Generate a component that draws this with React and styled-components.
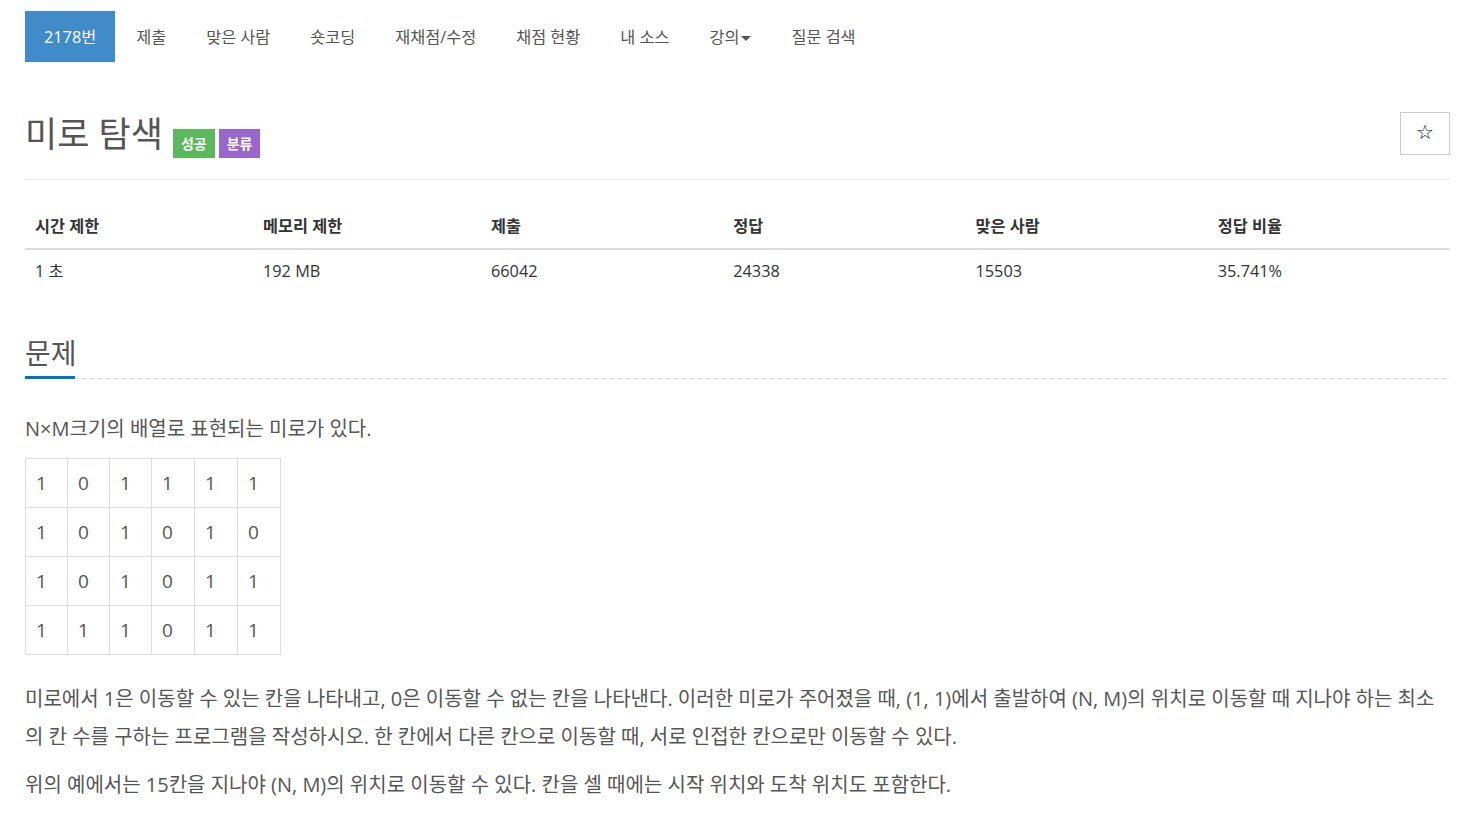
import React from "react";
import styled, { createGlobalStyle } from "styled-components";

const Global = createGlobalStyle`
  html, body { margin: 0; padding: 0; background: #fff; }
  body {
    font-family: "Open Sans", "Noto Sans CJK KR", sans-serif;
    color: #555;
    font-size: 14px;
  }
  * { box-sizing: border-box; }
`;

const Page = styled.div`
  width: 1425px;
  margin-left: 25px;
  padding-top: 11px;
`;

const Nav = styled.ul`
  display: flex;
  list-style: none;
  margin: 0;
  padding: 0;
  gap: 2px;
`;

const NavItem = styled.li`
  padding: 16px 19px 14px;
  height: 51px;
  font-size: 16.3px;
  line-height: 21px;
  color: ${(p) => (p.$active ? "#fff" : "#555")};
  background: ${(p) => (p.$active ? "#428bca" : "transparent")};
  display: flex;
  align-items: center;
  white-space: nowrap;
`;

const Caret = styled.span`
  display: inline-block;
  width: 0;
  height: 0;
  margin-left: 2px;
  border-top: 5px solid #555;
  border-left: 5px solid transparent;
  border-right: 5px solid transparent;
  margin-top: 2px;
`;

const Header = styled.div`
  display: flex;
  align-items: flex-start;
  justify-content: space-between;
  margin-top: 39px;
  padding-bottom: 20px;
  border-bottom: 1px solid #eee;
`;

const TitleRow = styled.div`
  display: flex;
  align-items: flex-end;
  margin-top: 8px;
`;

const Title = styled.h1`
  margin: 0;
  font-size: 35px;
  font-weight: 400;
  line-height: 50px;
  color: #555;
  margin-right: 10px;
`;

const Label = styled.span`
  display: inline-block;
  background: ${(p) => p.$bg};
  color: #fff;
  font-size: 14px;
  font-weight: 700;
  height: 29px;
  line-height: 29px;
  padding: 0 8px;
  margin-right: 4px;
  margin-bottom: 1px;
`;

const StarButton = styled.button`
  width: 50px;
  height: 43px;
  margin-top: 11px;
  border: 1px solid #ccc;
  background: #fff;
  font-size: 20px;
  line-height: 1;
  color: #111;
  display: flex;
  align-items: center;
  justify-content: center;
  padding: 0 0 4px;
  font-family: "DejaVu Sans", sans-serif;
`;

const InfoTable = styled.table`
  width: 100%;
  border-collapse: collapse;
  margin-top: 20px;
  table-layout: fixed;
`;

const Th = styled.th`
  text-align: left;
  font-weight: 700;
  font-size: 16.3px;
  color: #333;
  padding: 13px 10px 11px;
  border-bottom: 2px solid #ddd;
  width: ${(p) => p.$w};
`;

const Td = styled.td`
  font-size: 16.3px;
  color: #333;
  padding: 10px 10px;
  line-height: 22px;
`;

const SectionHead = styled.div`
  margin-top: 41px;
  border-bottom: 1px dotted #ddd;
  display: flex;
`;

const SectionTitle = styled.h2`
  margin: 0;
  font-size: 28px;
  font-weight: 400;
  line-height: 40px;
  color: #555;
  padding-bottom: 3px;
  border-bottom: 3px solid #0076c0;
  margin-bottom: -1px;
  width: 50px;
  white-space: nowrap;
`;

const Description = styled.div`
  margin-top: 31px;
  font-size: 20px;
  line-height: 38px;
  color: #555;
`;

const Para = styled.p`
  margin: 0 0 10px;
`;

const Grid = styled.table`
  border-collapse: collapse;
  margin: 5px 0 25px;
`;

const Cell = styled.td`
  border: 1px solid #ddd;
  padding: 8px 10px;
  height: 49px;
  font-size: 19px;
  line-height: 30px;
  color: #555;
  width: ${(p) => p.$w}px;
`;

const maze = [
  [1, 0, 1, 1, 1, 1],
  [1, 0, 1, 0, 1, 0],
  [1, 0, 1, 0, 1, 1],
  [1, 1, 1, 0, 1, 1],
];
const colW = [42, 42, 42, 43, 43, 43];

const navItems = ["제출", "맞은 사람", "숏코딩", "재채점/수정", "채점 현황", "내 소스"];

export default function App() {
  return (
    <>
      <Global />
      <Page>
        <Nav>
          <NavItem $active>2178번</NavItem>
          {navItems.map((t) => (
            <NavItem key={t}>{t}</NavItem>
          ))}
          <NavItem>
            강의<Caret />
          </NavItem>
          <NavItem>질문 검색</NavItem>
        </Nav>

        <Header>
          <TitleRow>
            <Title>미로 탐색</Title>
            <Label $bg="#5cb85c">성공</Label>
            <Label $bg="#9966cc">분류</Label>
          </TitleRow>
          <StarButton>☆</StarButton>
        </Header>

        <InfoTable>
          <thead>
            <tr>
              <Th $w="16%">시간 제한</Th>
              <Th $w="16%">메모리 제한</Th>
              <Th $w="17%">제출</Th>
              <Th $w="17%">정답</Th>
              <Th $w="17%">맞은 사람</Th>
              <Th $w="17%">정답 비율</Th>
            </tr>
          </thead>
          <tbody>
            <tr>
              <Td>1 초</Td>
              <Td>192 MB</Td>
              <Td>66042</Td>
              <Td>24338</Td>
              <Td>15503</Td>
              <Td>35.741%</Td>
            </tr>
          </tbody>
        </InfoTable>

        <SectionHead>
          <SectionTitle>문제</SectionTitle>
        </SectionHead>

        <Description>
          <Para>N×M크기의 배열로 표현되는 미로가 있다.</Para>
          <Grid>
            <tbody>
              {maze.map((row, i) => (
                <tr key={i}>
                  {row.map((v, j) => (
                    <Cell key={j} $w={colW[j]}>
                      {v}
                    </Cell>
                  ))}
                </tr>
              ))}
            </tbody>
          </Grid>
          <Para>
            미로에서 1은 이동할 수 있는 칸을 나타내고, 0은 이동할 수 없는 칸을 나타낸다. 이러한 미로가 주어졌을 때, (1, 1)에서 출발하여 (N, M)의 위치로 이동할 때 지나야 하는 최소의 칸 수를 구하는 프로그램을 작성하시오. 한 칸에서 다른 칸으로 이동할 때, 서로 인접한 칸으로만 이동할 수 있다.
          </Para>
          <Para>
            위의 예에서는 15칸을 지나야 (N, M)의 위치로 이동할 수 있다. 칸을 셀 때에는 시작 위치와 도착 위치도 포함한다.
          </Para>
        </Description>
      </Page>
    </>
  );
}
